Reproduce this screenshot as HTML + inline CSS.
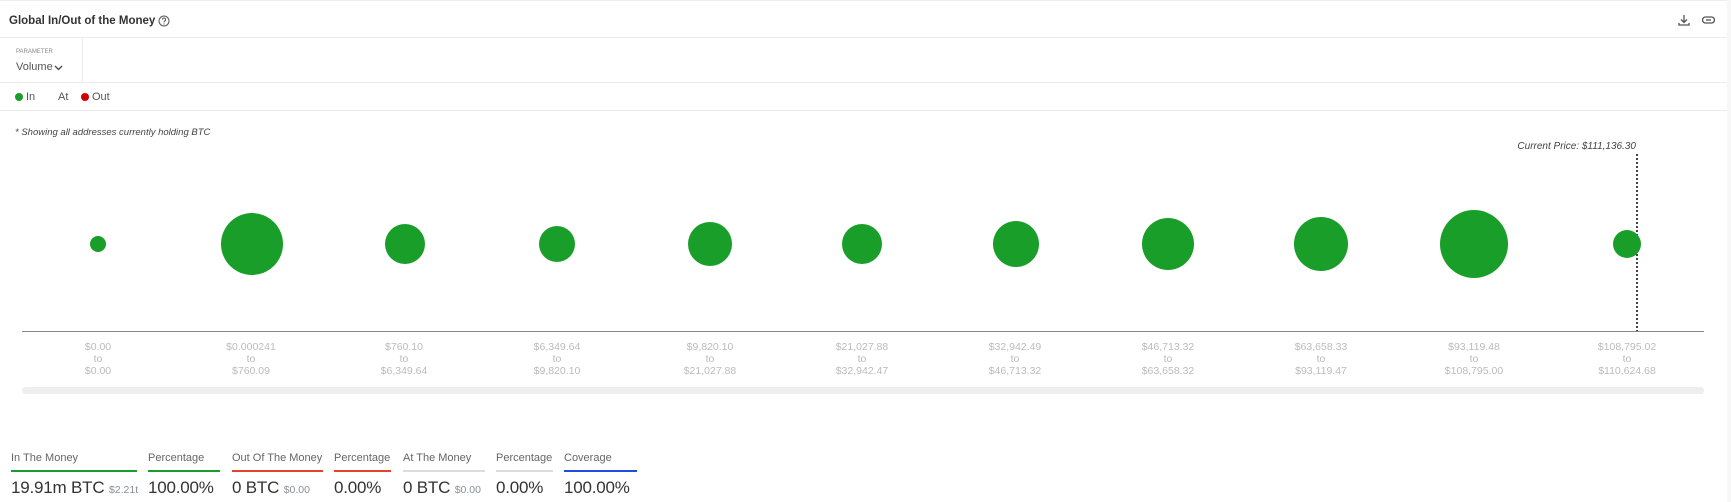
<!DOCTYPE html>
<html><head><meta charset="utf-8"><style>
*{margin:0;padding:0;box-sizing:border-box}
body{width:1731px;height:502px;background:#f7f7f7;font-family:"Liberation Sans",sans-serif;position:relative;overflow:hidden;color:#333}
.panel{position:absolute;left:0;top:0;width:1727px;height:502px;background:#fff;border-top:1px solid #eee}
.a{position:absolute;white-space:nowrap}
.hl{position:absolute;left:0;width:1727px;height:1px;background:#ececec}
.b{position:absolute;border-radius:50%;background:#1a9e2a}
.lab{position:absolute;top:340px;width:130px;text-align:center;font-size:10.5px;color:#bbb;line-height:12px}
.sl{position:absolute;top:451px;font-size:11px;color:#666}
.ul{position:absolute;top:469px;height:2px}
.sv{position:absolute;top:477px;font-size:17px;color:#333;letter-spacing:-0.2px}
.sv small{font-size:10.5px;color:#8a8f99;letter-spacing:0}
</style></head><body>
<div class="panel">
<div class="a" style="left:9px;top:14px;font-size:11.5px;font-weight:bold;color:#333">Global In/Out of the Money</div>
<svg class="a" style="left:158px;top:14px" width="12" height="12" viewBox="0 0 12 12"><circle cx="6" cy="6" r="5" fill="none" stroke="#555" stroke-width="1"/><path d="M4.4 4.7a1.6 1.6 0 1 1 2.2 1.4c-.5.2-.6.5-.6 1v.3" fill="none" stroke="#555" stroke-width="1"/><circle cx="6" cy="9" r=".6" fill="#555"/></svg>
<svg class="a" style="left:1677px;top:12px" width="14" height="14" viewBox="0 0 14 14"><path d="M7 2v7M4 6.5l3 3 3-3M2 10v2h10v-2" fill="none" stroke="#555" stroke-width="1.3"/></svg>
<svg class="a" style="left:1701px;top:13px" width="15" height="12" viewBox="0 0 15 12"><rect x="1.5" y="3" width="12" height="6" rx="3" fill="none" stroke="#555" stroke-width="1.3"/><path d="M5 6h5" stroke="#555" stroke-width="1.3"/></svg>
<div class="hl" style="top:36px"></div>
<div class="a" style="left:16px;top:48px;font-size:6px;color:#888">PARAMETER</div>
<div class="a" style="left:16px;top:60px;font-size:11px;color:#555">Volume</div>
<svg class="a" style="left:54px;top:64px" width="9" height="6" viewBox="0 0 9 6"><path d="M1 1l3.5 3.5L8 1" fill="none" stroke="#444" stroke-width="1.3"/></svg>
<div style="position:absolute;left:82px;top:37px;width:1px;height:44px;background:#ececec"></div>
<div class="hl" style="top:81px"></div>
<div class="a" style="left:15px;top:92px;width:8px;height:8px;border-radius:50%;background:#1a9e2a"></div>
<div class="a" style="left:26px;top:90px;font-size:11px;color:#555">In</div>
<div class="a" style="left:58px;top:90px;font-size:11px;color:#555">At</div>
<div class="a" style="left:81px;top:92px;width:8px;height:8px;border-radius:50%;background:#d00000"></div>
<div class="a" style="left:92px;top:90px;font-size:11px;color:#555">Out</div>
<div class="hl" style="top:109px"></div>
<div class="a" style="left:15px;top:126px;font-size:9.5px;font-style:italic;color:#444">* Showing all addresses currently holding BTC</div>
<div class="a" style="right:91px;top:140px;font-size:10px;font-style:italic;color:#444">Current Price: $111,136.30</div>
<div style="position:absolute;left:1636px;top:153px;height:178px;border-left:2px dotted #444"></div>
<div class="b" style="left:90px;top:235px;width:16px;height:16px"></div>
<div class="b" style="left:221px;top:212px;width:62px;height:62px"></div>
<div class="b" style="left:385px;top:223px;width:40px;height:40px"></div>
<div class="b" style="left:539px;top:225px;width:36px;height:36px"></div>
<div class="b" style="left:688px;top:221px;width:44px;height:44px"></div>
<div class="b" style="left:842px;top:223px;width:40px;height:40px"></div>
<div class="b" style="left:993px;top:220px;width:46px;height:46px"></div>
<div class="b" style="left:1142px;top:217px;width:52px;height:52px"></div>
<div class="b" style="left:1294px;top:216px;width:54px;height:54px"></div>
<div class="b" style="left:1440px;top:209px;width:68px;height:68px"></div>
<div class="b" style="left:1613px;top:229px;width:28px;height:28px"></div>
<div style="position:absolute;left:22px;top:330px;width:1682px;height:1px;background:#888"></div>
<div class="lab" style="left:33px">$0.00<br>to<br>$0.00</div>
<div class="lab" style="left:186px">$0.000241<br>to<br>$760.09</div>
<div class="lab" style="left:339px">$760.10<br>to<br>$6,349.64</div>
<div class="lab" style="left:492px">$6,349.64<br>to<br>$9,820.10</div>
<div class="lab" style="left:645px">$9,820.10<br>to<br>$21,027.88</div>
<div class="lab" style="left:797px">$21,027.88<br>to<br>$32,942.47</div>
<div class="lab" style="left:950px">$32,942.49<br>to<br>$46,713.32</div>
<div class="lab" style="left:1103px">$46,713.32<br>to<br>$63,658.32</div>
<div class="lab" style="left:1256px">$63,658.33<br>to<br>$93,119.47</div>
<div class="lab" style="left:1409px">$93,119.48<br>to<br>$108,795.00</div>
<div class="lab" style="left:1562px">$108,795.02<br>to<br>$110,624.68</div>
<div style="position:absolute;left:22px;top:386px;width:1682px;height:7px;border-radius:4px;background:#eee"></div>
<div class="sl" style="left:11px">In The Money</div><div class="ul" style="left:11px;width:126px;background:#1a9e2a"></div>
<div class="sv" style="left:11px">19.91m BTC <small>$2.21t</small></div>
<div class="sl" style="left:148px">Percentage</div><div class="ul" style="left:148px;width:72px;background:#1a9e2a"></div>
<div class="sv" style="left:148px">100.00%</div>
<div class="sl" style="left:232px">Out Of The Money</div><div class="ul" style="left:232px;width:91px;background:#e0452b"></div>
<div class="sv" style="left:232px">0 BTC <small>$0.00</small></div>
<div class="sl" style="left:334px">Percentage</div><div class="ul" style="left:334px;width:57px;background:#e0452b"></div>
<div class="sv" style="left:334px">0.00%</div>
<div class="sl" style="left:403px">At The Money</div><div class="ul" style="left:403px;width:82px;background:#ddd"></div>
<div class="sv" style="left:403px">0 BTC <small>$0.00</small></div>
<div class="sl" style="left:496px">Percentage</div><div class="ul" style="left:496px;width:57px;background:#ddd"></div>
<div class="sv" style="left:496px">0.00%</div>
<div class="sl" style="left:564px">Coverage</div><div class="ul" style="left:564px;width:73px;background:#1f4de0"></div>
<div class="sv" style="left:564px">100.00%</div>
</div>
</body></html>
